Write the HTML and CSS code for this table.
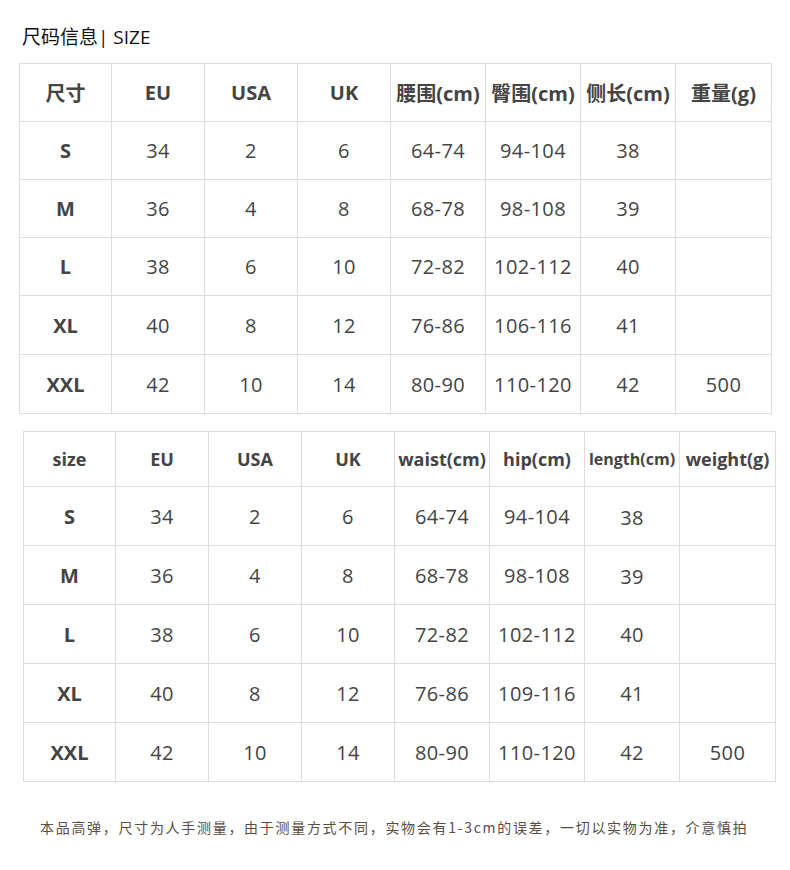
FILE: index.html
```html
<!DOCTYPE html>
<html lang="zh-CN">
<head>
<meta charset="utf-8">
<title>尺码信息</title>
<link rel="stylesheet" href="styles.css">
</head>
<body>
<div class="page">
  <h1 class="title">尺码信息| SIZE</h1>

  <table class="size-table t1">
    <colgroup>
      <col class="c1"><col class="c2"><col class="c3"><col class="c4"><col class="c5"><col class="c6"><col class="c7"><col class="c8">
    </colgroup>
    <thead>
      <tr><th>尺寸</th><th>EU</th><th>USA</th><th>UK</th><th>腰围(cm)</th><th>臀围(cm)</th><th>侧长(cm)</th><th>重量(g)</th></tr>
    </thead>
    <tbody>
      <tr><th>S</th><td>34</td><td>2</td><td>6</td><td>64-74</td><td>94-104</td><td>38</td><td></td></tr>
      <tr><th>M</th><td>36</td><td>4</td><td>8</td><td>68-78</td><td>98-108</td><td>39</td><td></td></tr>
      <tr><th>L</th><td>38</td><td>6</td><td>10</td><td>72-82</td><td>102-112</td><td>40</td><td></td></tr>
      <tr class="tall"><th>XL</th><td>40</td><td>8</td><td>12</td><td>76-86</td><td>106-116</td><td>41</td><td></td></tr>
      <tr class="tall"><th>XXL</th><td>42</td><td>10</td><td>14</td><td>80-90</td><td>110-120</td><td>42</td><td>500</td></tr>
    </tbody>
  </table>

  <table class="size-table t2">
    <colgroup>
      <col class="c1"><col class="c2"><col class="c3"><col class="c4"><col class="c5"><col class="c6"><col class="c7"><col class="c8">
    </colgroup>
    <thead>
      <tr><th>size</th><th>EU</th><th>USA</th><th>UK</th><th>waist(cm)</th><th>hip(cm)</th><th class="small">length(cm)</th><th>weight(g)</th></tr>
    </thead>
    <tbody>
      <tr><th>S</th><td>34</td><td>2</td><td>6</td><td>64-74</td><td>94-104</td><td class="low">38</td><td></td></tr>
      <tr><th>M</th><td>36</td><td>4</td><td>8</td><td>68-78</td><td>98-108</td><td class="low">39</td><td></td></tr>
      <tr><th>L</th><td>38</td><td>6</td><td>10</td><td>72-82</td><td>102-112</td><td>40</td><td></td></tr>
      <tr><th>XL</th><td>40</td><td>8</td><td>12</td><td>76-86</td><td>109-116</td><td>41</td><td></td></tr>
      <tr><th>XXL</th><td>42</td><td>10</td><td>14</td><td>80-90</td><td>110-120</td><td>42</td><td>500</td></tr>
    </tbody>
  </table>

  <p class="note">本品高弹，尺寸为人手测量，由于测量方式不同，实物会有1-3cm的误差，一切以实物为准，介意慎拍</p>
</div>
</body>
</html>
```
FILE: styles.css
```css
html, body {
  margin: 0;
  padding: 0;
  background: #ffffff;
}

body {
  font-family: "Open Sans", "Noto Sans CJK SC", sans-serif;
  color: #444444;
}

.page {
  width: 790px;
  height: 870px;
  box-sizing: border-box;
  padding-top: 23px;
}

.title {
  margin: 0 0 12px 22px;
  font-family: "Open Sans", "Noto Sans CJK SC", sans-serif;
  font-size: 19px;
  font-weight: 400;
  line-height: 28px;
  color: #111111;
}

.size-table {
  border-collapse: collapse;
  table-layout: fixed;
  width: 753px;
}

.size-table th,
.size-table td {
  border: 1px solid #dcdcdc;
  padding: 0;
  text-align: center;
  vertical-align: middle;
  white-space: nowrap;
  overflow: visible;
}

.size-table th {
  font-weight: 700;
  color: #444444;
}

.size-table td {
  font-weight: 400;
  color: #444444;
  letter-spacing: 0.4px;
}

.c1 { width: 92px; }
.c2 { width: 93px; }
.c3 { width: 93px; }
.c4 { width: 93px; }
.c5 { width: 95px; }
.c6 { width: 95px; }
.c7 { width: 95px; }
.c8 { width: 96px; }

.t1 {
  margin-left: 19px;
}

.t1 tr {
  height: 58px;
}

.t1 tr.tall {
  height: 59px;
}

.t1 th,
.t1 td {
  font-size: 20px;
}

.t2 {
  margin-left: 23px;
  margin-top: 17px;
}

.t2 thead tr {
  height: 55px;
}

.t2 tbody tr {
  height: 59px;
}

.t2 thead th {
  font-size: 18px;
}

.t2 tbody th,
.t2 tbody td {
  font-size: 20px;
}

.t2 thead th.small {
  font-size: 16px;
}

.t2 td.low {
  padding-top: 3px;
}

.note {
  margin: 35px 0 0 40px;
  font-family: "Noto Sans CJK SC", sans-serif;
  font-size: 14px;
  letter-spacing: 1.7px;
  line-height: 20px;
  color: #5a4e44;
}
```
